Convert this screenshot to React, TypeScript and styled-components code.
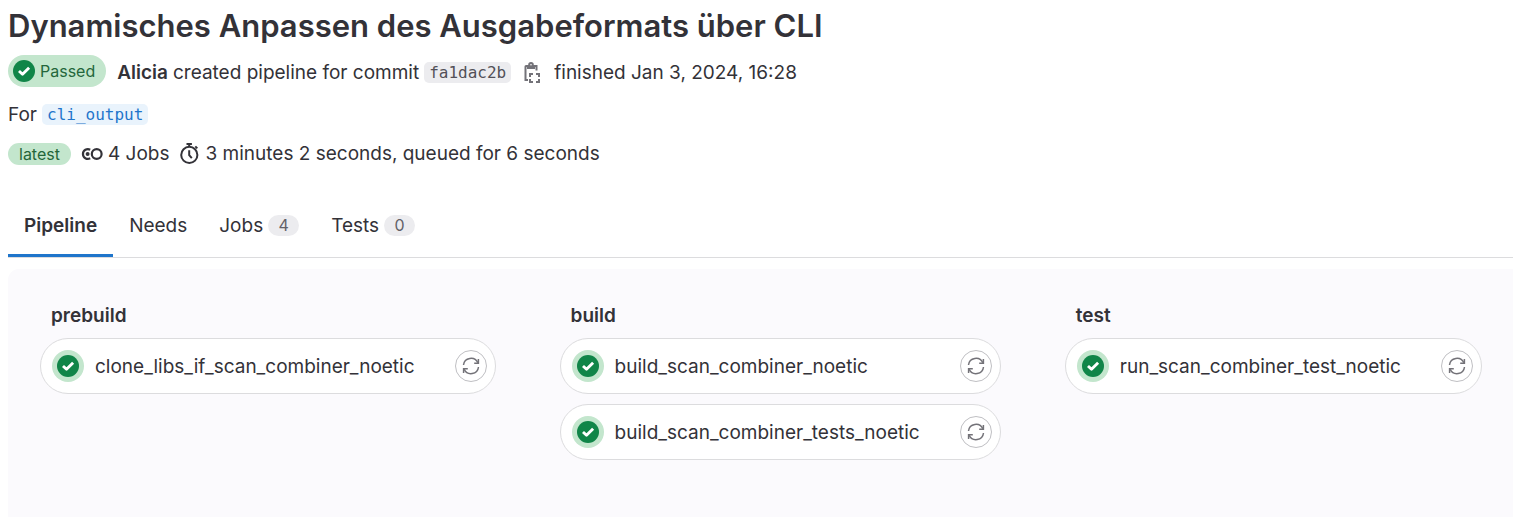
import React from "react";
import styled, { createGlobalStyle } from "styled-components";

const GlobalStyle = createGlobalStyle`
  *, *::before, *::after { box-sizing: border-box; }
  body {
    margin: 0;
    background: #fff;
    color: #333238;
    font-family: Inter, "Noto Sans", sans-serif;
    font-size: 19px;
    line-height: 25px;
  }
  h1, h2, p, ul { margin: 0; padding: 0; }
  ul { list-style: none; }
  button { font: inherit; color: inherit; }
  svg { display: block; flex: none; }
`;

const Page = styled.div`
  display: flex;
  flex-direction: column;
  min-height: 100vh;
  padding-left: 8px;
`;

const Header = styled.header`
  display: flex;
  flex-direction: column;
  padding-top: 6px;
`;

const Title = styled.h1`
  font-size: 31px;
  line-height: 40px;
  font-weight: 600;
`;

const Line = styled.div<{ $top: number }>`
  display: flex;
  flex-wrap: wrap;
  align-items: center;
  margin-top: ${(p) => p.$top}px;
  white-space: nowrap;
`;

const StatusBadge = styled.a`
  display: flex;
  align-items: center;
  gap: 5px;
  height: 32px;
  margin-right: 11px;
  padding: 0 11px 0 5px;
  border-radius: 16px;
  background: #c3e6cd;
  color: #24663b;
  font-size: 16px;
  text-decoration: none;
`;

const Description = styled.div`
  display: flex;
  align-items: center;
  padding-top: 2px;
`;

const Author = styled.a`
  margin-right: 5px;
  color: inherit;
  font-weight: 600;
  text-decoration: none;
`;

const Ref = styled.a<{ $link?: boolean }>`
  margin-left: 5px;
  padding: 0 5px;
  border-radius: 5px;
  background: ${(p) => (p.$link ? "#e9f3fc" : "#ececef")};
  color: ${(p) => (p.$link ? "#1f75cb" : "#535158")};
  font-family: "DejaVu Sans Mono", monospace;
  font-size: 16px;
  line-height: 21px;
  text-decoration: none;
`;

const CopyButton = styled.button`
  margin: 0 12px;
  padding: 0;
  border: 0;
  background: none;
  color: #737278;
`;

const Latest = styled.span`
  margin-right: 10px;
  padding: 0 11px;
  border-radius: 11px;
  background: #c3e6cd;
  color: #24663b;
  font-size: 16px;
  line-height: 22px;
`;

const Stat = styled.span`
  display: flex;
  align-items: center;
  gap: 5px;
  margin-right: 10px;
`;

const Tabs = styled.nav`
  display: flex;
  margin-top: 28px;
  border-bottom: 1px solid #dcdcde;
`;

const Tab = styled.a<{ $active?: boolean }>`
  display: flex;
  align-items: center;
  gap: 5px;
  height: 63px;
  padding: 0 16px;
  color: inherit;
  font-weight: ${(p) => (p.$active ? 600 : 400)};
  text-decoration: none;
  box-shadow: ${(p) => (p.$active ? "inset 0 -3px 0 #1f75cb" : "none")};
`;

const Count = styled.span`
  min-width: 31px;
  padding: 0 10px;
  border-radius: 11px;
  background: #ececef;
  color: #626168;
  font-size: 16px;
  line-height: 21px;
  text-align: center;
`;

const Graph = styled.main`
  display: flex;
  flex: 1;
  align-items: flex-start;
  gap: 64px;
  margin-top: 11px;
  padding: 34px 31px 57px 32px;
  border-radius: 11px 0 0 0;
  background: #fbfafd;
`;

const Stage = styled.section`
  flex: 1 1 auto;
`;

const StageName = styled.h2`
  padding-left: 11px;
  font-size: 19px;
  line-height: 25px;
  font-weight: 600;
`;

const JobList = styled.ul`
  display: flex;
  flex-direction: column;
  gap: 10px;
  margin-top: 10px;
`;

const Job = styled.li`
  display: flex;
  align-items: center;
  height: 56px;
  padding: 0 8px 0 11px;
  border: 1px solid #dcdcde;
  border-radius: 28px;
  background: #fff;
`;

const JobLink = styled.a`
  display: flex;
  flex: 1;
  align-items: center;
  gap: 11px;
  color: inherit;
  text-decoration: none;
  white-space: nowrap;
`;

const JobStatus = styled.span`
  display: grid;
  place-items: center;
  width: 32px;
  height: 32px;
  border-radius: 50%;
  background: #c3e6cd;
`;

const RetryButton = styled.button`
  display: grid;
  place-items: center;
  width: 32px;
  height: 32px;
  padding: 0;
  border: 1px solid #bfbfc3;
  border-radius: 50%;
  background: #fff;
  color: #737278;
`;

const CheckIcon = () => (
  <svg width="22" height="22" viewBox="0 0 22 22" aria-hidden="true">
    <circle cx="11" cy="11" r="11" fill="#108548" />
    <path d="M6 11 9.5 14.3 16.1 7.8" fill="none" stroke="#fff" strokeWidth="2.9" strokeLinejoin="round" />
  </svg>
);

const RetryIcon = () => (
  <svg width="18" height="18" viewBox="0 0 18 18" fill="none" stroke="currentColor" strokeWidth="1.5" aria-hidden="true">
    <path d="M1.5 8A7.5 7.500 0 0 1 15.800 5.800M16.500 10A7.500 7.500 0 0 1 2.200 12.200" />
    <path d="M16.400 2v4.200h-4.200M1.600 16v-4.200h4.200" />
  </svg>
);

const CopyIcon = () => (
  <svg width="19" height="21" viewBox="-1 0 19 21" fill="none" stroke="currentColor" strokeWidth="2" aria-hidden="true">
    <path d="M3.5 4H2a.5.5 0 0 0-.5.5v13.5H4M10.5 4H12.5v4.500" />
    <path d="M4 3v3h6V3" />
    <circle cx="7" cy="2.8" r="1.8" />
    <path d="M6 15v-3h3M12 12h3v3M15 17v3h-3M9 20H6v-3" />
  </svg>
);

const PipelineIcon = () => (
  <svg width="22" height="22" viewBox="0 0 22 22" fill="none" stroke="currentColor" strokeWidth="2.2" aria-hidden="true">
    <path d="M9.2 6.7A4.9 4.9 0 1 0 9.2 15.3" />
    <circle cx="6.6" cy="11" r="2" fill="currentColor" stroke="none" />
    <circle cx="15.7" cy="11" r="4.9" />
  </svg>
);

const TimerIcon = () => (
  <svg width="21" height="21" viewBox="0 0 21 21" fill="none" stroke="currentColor" strokeWidth="2" aria-hidden="true">
    <circle cx="10.3" cy="11.9" r="8.1" />
    <path d="M7.5 1.1h5.4M10.2 1v3M16.3 3.4l2 2M10.2 7.2v4.9l2.6 3" />
  </svg>
);

const stages = [
  { name: "prebuild", jobs: ["clone_libs_if_scan_combiner_noetic"] },
  { name: "build", jobs: ["build_scan_combiner_noetic", "build_scan_combiner_tests_noetic"] },
  { name: "test", jobs: ["run_scan_combiner_test_noetic"] },
];

export default function App() {
  return (
    <>
      <GlobalStyle />
      <Page>
        <Header>
          <Title>Dynamisches Anpassen des Ausgabeformats über CLI</Title>
          <Line $top={9}>
            <StatusBadge href="#status">
              <CheckIcon />
              Passed
            </StatusBadge>
            <Description>
              <Author href="#author">Alicia</Author>
              <span>created pipeline for commit</span>
              <Ref href="#commit">fa1dac2b</Ref>
              <CopyButton type="button" aria-label="Copy commit SHA">
                <CopyIcon />
              </CopyButton>
              <span>finished Jan 3, 2024, 16:28</span>
            </Description>
          </Line>
          <Line $top={15}>
            <span>For</span>
            <Ref href="#branch" $link>cli_output</Ref>
          </Line>
          <Line $top={14}>
            <Latest>latest</Latest>
            <Stat>
              <PipelineIcon />
              4 Jobs
            </Stat>
            <Stat>
              <TimerIcon />
              3 minutes 2 seconds, queued for 6 seconds
            </Stat>
          </Line>
        </Header>
        <Tabs aria-label="Pipeline views">
          <Tab href="#pipeline" $active aria-current="page">Pipeline</Tab>
          <Tab href="#needs">Needs</Tab>
          <Tab href="#jobs">Jobs <Count>4</Count></Tab>
          <Tab href="#tests">Tests <Count>0</Count></Tab>
        </Tabs>
        <Graph>
          {stages.map((stage) => (
            <Stage key={stage.name}>
              <StageName>{stage.name}</StageName>
              <JobList>
                {stage.jobs.map((job) => (
                  <Job key={job}>
                    <JobLink href={`#${job}`}>
                      <JobStatus><CheckIcon /></JobStatus>
                      {job}
                    </JobLink>
                    <RetryButton type="button" aria-label={`Retry ${job}`}>
                      <RetryIcon />
                    </RetryButton>
                  </Job>
                ))}
              </JobList>
            </Stage>
          ))}
        </Graph>
      </Page>
    </>
  );
}
